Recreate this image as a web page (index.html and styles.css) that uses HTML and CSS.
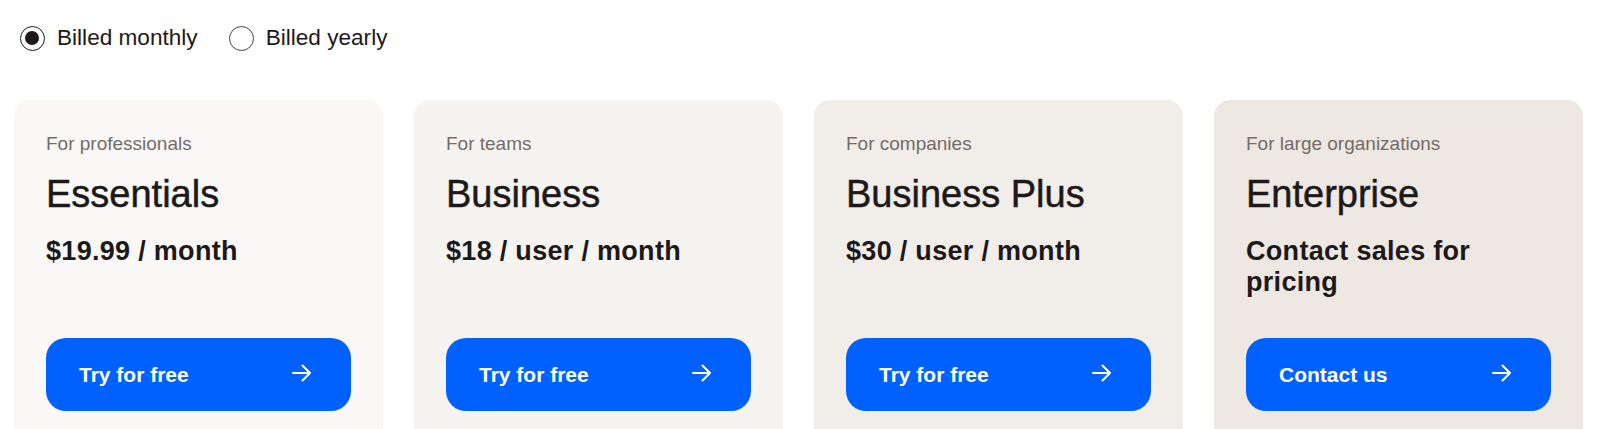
FILE: index.html
```html
<!DOCTYPE html>
<html lang="en">
<head>
<meta charset="utf-8">
<title>Plans</title>
<link rel="stylesheet" href="styles.css">
</head>
<body>
<div class="page">
  <div class="billing">
    <label class="opt"><input type="radio" name="billing" class="radio" checked><span class="opt-label">Billed monthly</span></label>
    <label class="opt"><input type="radio" name="billing" class="radio"><span class="opt-label">Billed yearly</span></label>
  </div>
  <div class="plans">
    <div class="card card-1">
      <div class="audience">For professionals</div>
      <div class="name">Essentials</div>
      <div class="price">$19.99 / month</div>
      <a class="btn" href="#"><span>Try for free</span><svg class="arrow" width="20" height="18" viewBox="0 0 20 18"><path d="M1 9H18M10.5 1.5L18 9L10.5 16.5" fill="none" stroke="#fff" stroke-width="2" stroke-linecap="round" stroke-linejoin="round"/></svg></a>
    </div>
    <div class="card card-2">
      <div class="audience">For teams</div>
      <div class="name">Business</div>
      <div class="price">$18 / user / month</div>
      <a class="btn" href="#"><span>Try for free</span><svg class="arrow" width="20" height="18" viewBox="0 0 20 18"><path d="M1 9H18M10.5 1.5L18 9L10.5 16.5" fill="none" stroke="#fff" stroke-width="2" stroke-linecap="round" stroke-linejoin="round"/></svg></a>
    </div>
    <div class="card card-3">
      <div class="audience">For companies</div>
      <div class="name">Business Plus</div>
      <div class="price">$30 / user / month</div>
      <a class="btn" href="#"><span>Try for free</span><svg class="arrow" width="20" height="18" viewBox="0 0 20 18"><path d="M1 9H18M10.5 1.5L18 9L10.5 16.5" fill="none" stroke="#fff" stroke-width="2" stroke-linecap="round" stroke-linejoin="round"/></svg></a>
    </div>
    <div class="card card-4">
      <div class="audience">For large organizations</div>
      <div class="name">Enterprise</div>
      <div class="price">Contact sales for pricing</div>
      <a class="btn" href="#"><span>Contact us</span><svg class="arrow" width="20" height="18" viewBox="0 0 20 18"><path d="M1 9H18M10.5 1.5L18 9L10.5 16.5" fill="none" stroke="#fff" stroke-width="2" stroke-linecap="round" stroke-linejoin="round"/></svg></a>
    </div>
  </div>
</div>
</body>
</html>
```
FILE: styles.css
```css
* { box-sizing: border-box; }
html, body { margin: 0; padding: 0; background: #fff; }
body {
  font-family: "Liberation Sans", Arial, sans-serif;
  color: #1e1919;
  overflow: hidden;
}
.page {
  padding: 0 14px;
}
.billing {
  display: flex;
  align-items: center;
  gap: 31px;
  height: 26px;
  margin-top: 25px;
  padding-left: 6px;
}
.opt {
  display: flex;
  align-items: center;
  gap: 12px;
  cursor: pointer;
}
.radio {
  appearance: none;
  -webkit-appearance: none;
  margin: 0;
  width: 25px;
  height: 25px;
  border-radius: 50%;
  border: 1.5px solid #4a4545;
  background: #fff;
  position: relative;
  flex: none;
}
.radio:checked {
  border-color: #1e1919;
}
.radio:checked::after {
  content: "";
  position: absolute;
  left: 4px;
  top: 4px;
  width: 14px;
  height: 14px;
  border-radius: 50%;
  background: #1e1919;
}
.opt-label {
  font-size: 22.6px;
  line-height: 26px;
  color: #1e1919;
}
.plans {
  display: grid;
  grid-template-columns: repeat(4, 369px);
  gap: 31px;
  margin-top: 49px;
}
.card {
  border-radius: 16px;
  padding: 32px 32px 40px;
  min-height: 360px;
  display: flex;
  flex-direction: column;
}
.card-1 { background: #faf8f6; }
.card-2 { background: #f6f4f1; }
.card-3 { background: #f1eee9; }
.card-4 { background: #ede8e1; }
.audience {
  font-size: 19px;
  line-height: 24px;
  color: #736c67;
}
.name {
  font-size: 38px;
  line-height: 46px;
  margin-top: 15px;
  color: #1e1919;
  -webkit-text-stroke: 0.5px #1e1919;
}
.price {
  font-size: 27px;
  line-height: 31px;
  font-weight: 700;
  letter-spacing: 0.3px;
  margin-top: 19px;
  min-height: 62px;
  max-width: 270px;
}
.btn {
  margin-top: 40px;
  height: 73px;
  border-radius: 20px;
  background: #0061fe;
  color: #fff;
  text-decoration: none;
  display: flex;
  align-items: center;
  justify-content: space-between;
  padding: 0 39px 0 33px;
  font-size: 21px;
  font-weight: 700;
}
.arrow { display: block; margin-top: -4px; }
```
